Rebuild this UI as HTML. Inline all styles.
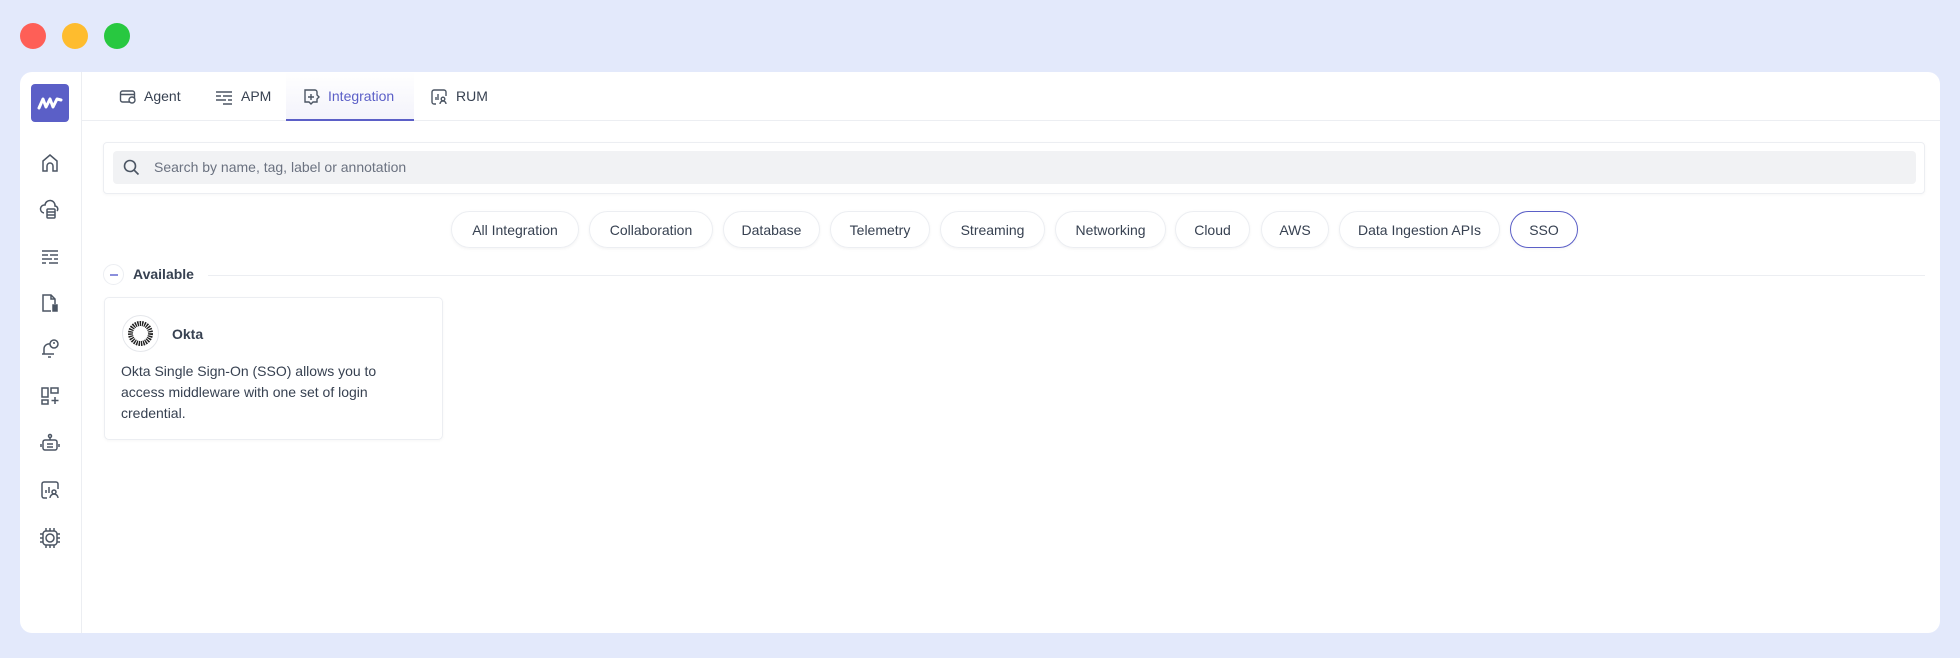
<!DOCTYPE html>
<html><head><meta charset="utf-8"><style>
*{box-sizing:border-box;margin:0;padding:0}
body{width:1960px;height:658px;background:#e3e9fb;font-family:"Liberation Sans",sans-serif;position:relative;overflow:hidden;color:#374151}
.dot{position:absolute;top:23px;width:26px;height:26px;border-radius:50%}
.win{position:absolute;left:20px;top:72px;width:1920px;height:561px;background:#fff;border-radius:12px;overflow:hidden}
.side{position:absolute;left:0;top:0;width:62px;height:100%;border-right:1px solid #eceef2}
.logo{position:absolute;left:11px;top:12px;width:38px;height:38px;background:#5b5fc7;border-radius:4px}
.si{position:absolute;left:19px;width:22px;height:22px}
.tabs{position:absolute;left:62px;top:0;right:0;height:49px;border-bottom:1px solid #eceef2}
.tab{position:absolute;top:0;height:49px;line-height:49px;font-size:14px;color:#374151}
.tab svg{position:absolute;top:16px}
.search{position:absolute;left:83px;top:70px;width:1822px;height:52px;border:1px solid #eceef2;border-radius:4px;box-shadow:0 1px 3px rgba(0,0,0,.04)}
.inp{position:absolute;left:9px;top:8px;right:8px;height:33px;background:#f1f2f4;border-radius:4px;font-size:14px;color:#6b7280;line-height:33px;padding-left:41px}
.pill{position:absolute;top:139px;height:37px;line-height:37px;border:1px solid #eceef2;border-radius:19px;font-size:14px;text-align:center;color:#374151;box-shadow:0 1px 3px rgba(0,0,0,.05)}
.card{position:absolute;left:84px;top:225px;width:339px;height:143px;border:1px solid #eceef2;border-radius:5px;box-shadow:0 1px 3px rgba(0,0,0,.04)}
</style></head><body>
<div class="dot" style="left:20px;background:#fe5f57"></div>
<div class="dot" style="left:62px;background:#febc2e"></div>
<div class="dot" style="left:104px;background:#28c840"></div>
<div class="win">
 <div class="side">
  <div class="logo"><svg width="38" height="38" viewBox="0 0 38 38"><path d="M8 24 L12 15 L15 23 L19 15 L22 23 L26 15 L30 16" fill="none" stroke="#fff" stroke-width="3" stroke-linejoin="round" stroke-linecap="round"/></svg></div>
  <svg class="si" style="top:80px" viewBox="0 0 22 22" fill="none" stroke="#4b5563" stroke-width="1.5"><path d="M4 19V9l7-6 7 6v10h-4v-5a3 3 0 0 0-6 0v5z"/></svg>
  <svg class="si" style="top:127px" viewBox="0 0 22 22" fill="none" stroke="#4b5563" stroke-width="1.5"><path d="M5 14a4 4 0 0 1 1-8 5 5 0 0 1 10 1 3 3 0 0 1 2 5"/><rect x="8" y="10" width="8" height="9" rx="1"/><path d="M8 13h8M8 16h8"/></svg>
  <svg class="si" style="top:174px" viewBox="0 0 22 22" fill="none" stroke="#4b5563" stroke-width="1.5"><path d="M3 5h16M3 9h6M11 9h8M3 13h10M15 13h4M3 17h4M10 17h9"/></svg>
  <svg class="si" style="top:220px" viewBox="0 0 22 22" fill="none" stroke="#4b5563" stroke-width="1.5"><path d="M12 19H4V3h8l4 4v5"/><path d="M12 3v4h4"/><rect x="14" y="13" width="4" height="6" fill="#4b5563"/></svg>
  <svg class="si" style="top:266px" viewBox="0 0 22 22" fill="none" stroke="#4b5563" stroke-width="1.5"><path d="M5 16v-5a5 5 0 0 1 6-5M3 16h12M9 19h3"/><circle cx="15" cy="6" r="4"/><path d="M15 4v2"/></svg>
  <svg class="si" style="top:313px" viewBox="0 0 22 22" fill="none" stroke="#4b5563" stroke-width="1.5"><rect x="3" y="3" width="6" height="9"/><rect x="12" y="3" width="7" height="5"/><rect x="3" y="15" width="6" height="4"/><path d="M16 12v7M12.5 15.5h7"/></svg>
  <svg class="si" style="top:360px" viewBox="0 0 22 22" fill="none" stroke="#4b5563" stroke-width="1.5"><rect x="4" y="8" width="14" height="10" rx="2"/><circle cx="11" cy="4" r="1.5"/><path d="M11 5.5V8M8 12h6M8 15h6M2 12v3M20 12v3"/></svg>
  <svg class="si" style="top:407px" viewBox="0 0 22 22" fill="none" stroke="#4b5563" stroke-width="1.5"><path d="M8 19H5a2 2 0 0 1-2-2V5a2 2 0 0 1 2-2h12a2 2 0 0 1 2 2v5"/><path d="M7 14v-3M10 14V8"/><circle cx="15" cy="13" r="2"/><path d="M11 19a4 4 0 0 1 8 0"/></svg>
  <svg class="si" style="top:455px" viewBox="0 0 22 22" fill="none" stroke="#4b5563" stroke-width="1.5"><rect x="4" y="4" width="14" height="14" rx="3"/><circle cx="11" cy="11" r="4"/><path d="M7 1v3M11 1v3M15 1v3M7 18v3M11 18v3M15 18v3M1 7h3M1 11h3M1 15h3M18 7h3M18 11h3M18 15h3"/></svg>
 </div>
 <div class="tabs">
  <div class="tab" style="left:37px;padding-left:25px;width:90px"><svg style="left:0" width="18" height="18" viewBox="0 0 18 18" fill="none" stroke="#4b5563" stroke-width="1.4"><rect x="1.5" y="3" width="14" height="11" rx="2"/><path d="M1.5 6.5h14"/><circle cx="13" cy="12" r="3" fill="#fff"/></svg>Agent</div>
  <div class="tab" style="left:133px;padding-left:26px;width:70px"><svg style="left:0" width="18" height="18" viewBox="0 0 18 18" fill="none" stroke="#4b5563" stroke-width="1.4"><path d="M1 4h16M1 8h5M8 8h9M1 12h10M13 12h4M8 16h9"/></svg>APM</div>
  <div class="tab" style="left:204px;width:128px;background:linear-gradient(#fff,#f3f3fb);border-bottom:2px solid #5b5fc7;color:#5b5fc7;padding-left:42px"><svg style="left:16px" width="18" height="18" viewBox="0 0 18 18" fill="none" stroke="#4b5563" stroke-width="1.4"><path d="M3 2h10a2 2 0 0 1 2 2v3l2 2-2 2v3H11l-2 2-2-2H3z"/><path d="M9 6v6M6 9h6"/></svg>Integration</div>
  <div class="tab" style="left:348px;padding-left:26px;width:70px"><svg style="left:0" width="18" height="18" viewBox="0 0 18 18" fill="none" stroke="#4b5563" stroke-width="1.4"><path d="M6 16H4a2 2 0 0 1-2-2V4a2 2 0 0 1 2-2h10a2 2 0 0 1 2 2v4"/><path d="M6 12V9M8 12V6"/><circle cx="13" cy="11" r="1.8"/><path d="M10 16a3 3 0 0 1 6 0"/></svg>RUM</div>
 </div>
 <div class="search"><div class="inp"><svg style="position:absolute;left:10px;top:8px" width="17" height="17" viewBox="0 0 17 17" fill="none" stroke="#4b5563" stroke-width="1.6"><circle cx="7" cy="7" r="5.5"/><path d="M11 11l4.5 4.5"/></svg>Search by name, tag, label or annotation</div></div>
 <div class="pill" style="left:431px;width:128px">All Integration</div>
 <div class="pill" style="left:569px;width:124px">Collaboration</div>
 <div class="pill" style="left:703px;width:97px">Database</div>
 <div class="pill" style="left:810px;width:100px">Telemetry</div>
 <div class="pill" style="left:920px;width:105px">Streaming</div>
 <div class="pill" style="left:1035px;width:111px">Networking</div>
 <div class="pill" style="left:1155px;width:75px">Cloud</div>
 <div class="pill" style="left:1241px;width:68px">AWS</div>
 <div class="pill" style="left:1319px;width:161px">Data Ingestion APIs</div>
 <div class="pill" style="left:1490px;width:68px;border-color:#5b5fc7">SSO</div>
 <div style="position:absolute;left:83px;top:192px;width:21px;height:21px;border:1px solid #eceef2;border-radius:50%"><div style="position:absolute;left:6px;top:9px;width:8px;height:2px;background:#8b8fdc"></div></div>
 <div style="position:absolute;left:113px;top:194px;font-size:14px;font-weight:bold;color:#374151">Available</div>
 <div style="position:absolute;left:188px;top:203px;width:1717px;height:1px;background:#eceef2"></div>
 <div class="card">
  <div style="position:absolute;left:17px;top:17px;width:37px;height:37px;border:1px solid #e5e7eb;border-radius:50%;background:#fff">
   <svg width="35" height="35" viewBox="0 0 35 35"><circle cx="17.5" cy="17.5" r="10" fill="none" stroke="#222" stroke-width="5" stroke-dasharray="1.4 0.9"/><circle cx="17.5" cy="17.5" r="6.5" fill="#fff"/></svg>
  </div>
  <div style="position:absolute;left:67px;top:28px;font-size:14px;font-weight:bold;color:#374151">Okta</div>
  <div style="position:absolute;left:16px;top:63px;width:300px;font-size:14px;line-height:21px;color:#374151">Okta Single Sign-On (SSO) allows you to access middleware with one set of login credential.</div>
 </div>
</div>
</body></html>
